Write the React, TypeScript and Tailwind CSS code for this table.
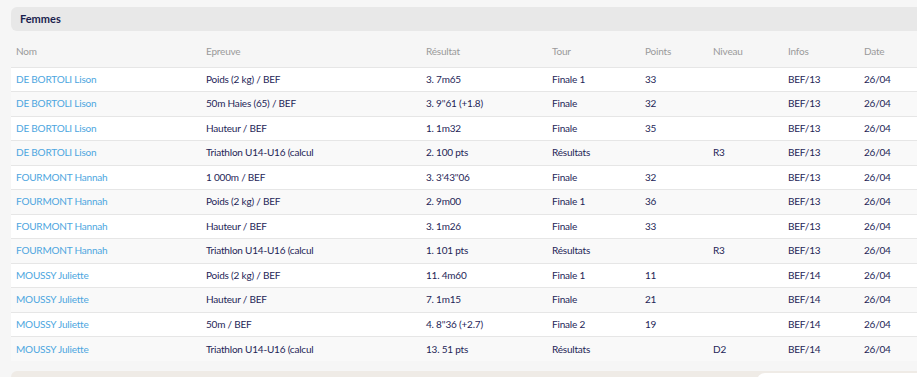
const rows = [
  ["DE BORTOLI Lison", "Poids (2 kg) / BEF", "3. 7m65", "Finale 1", "33", "", "BEF/13", "26/04"],
  ["DE BORTOLI Lison", "50m Haies (65) / BEF", "3. 9''61 (+1.8)", "Finale", "32", "", "BEF/13", "26/04"],
  ["DE BORTOLI Lison", "Hauteur / BEF", "1. 1m32", "Finale", "35", "", "BEF/13", "26/04"],
  ["DE BORTOLI Lison", "Triathlon U14-U16 (calcul", "2. 100 pts", "Résultats", "", "R3", "BEF/13", "26/04"],
  ["FOURMONT Hannah", "1 000m / BEF", "3. 3'43''06", "Finale", "32", "", "BEF/13", "26/04"],
  ["FOURMONT Hannah", "Poids (2 kg) / BEF", "2. 9m00", "Finale 1", "36", "", "BEF/13", "26/04"],
  ["FOURMONT Hannah", "Hauteur / BEF", "3. 1m26", "Finale", "33", "", "BEF/13", "26/04"],
  ["FOURMONT Hannah", "Triathlon U14-U16 (calcul", "1. 101 pts", "Résultats", "", "R3", "BEF/13", "26/04"],
  ["MOUSSY Juliette", "Poids (2 kg) / BEF", "11. 4m60", "Finale 1", "11", "", "BEF/14", "26/04"],
  ["MOUSSY Juliette", "Hauteur / BEF", "7. 1m15", "Finale", "21", "", "BEF/14", "26/04"],
  ["MOUSSY Juliette", "50m / BEF", "4. 8''36 (+2.7)", "Finale 2", "19", "", "BEF/14", "26/04"],
  ["MOUSSY Juliette", "Triathlon U14-U16 (calcul", "13. 51 pts", "Résultats", "", "D2", "BEF/14", "26/04"],
];

const headers = ["Nom", "Epreuve", "Résultat", "Tour", "Points", "Niveau", "Infos", "Date"];
const widths = ["w-[190px]", "w-[220px]", "w-[126px]", "w-[93px]", "w-[68px]", "w-[75px]", "w-[76px]", "w-[120px]"];

export default function App() {
  return (
    <div className="h-[377px] w-[917px] overflow-hidden bg-[#f6f6f6] pt-[7px] pl-[11px] font-['Lato',sans-serif]">
      <div className="w-[1000px]">
        <div className="flex h-[24px] items-center rounded-l-md bg-[#e8e8e8] pl-[9px] text-[11px] font-bold text-[#1b1f4f]">
          Femmes
        </div>
        <table className="mt-[5px] w-[968px] table-fixed border-collapse text-[10px] tracking-[-0.2px]">
          <thead>
            <tr className="h-[31px]">
              {headers.map((h, i) => (
                <th key={h} className={`${widths[i]} pl-[5px] pt-[1px] text-left font-normal text-[#9a9a9a]`}>
                  {h}
                </th>
              ))}
            </tr>
          </thead>
          <tbody>
            {rows.map((r, k) => (
              <tr
                key={k}
                className={`h-[24.5px] border-t border-[#e6e6e6] ${k % 2 === 0 ? "bg-white" : "bg-[#f9f9f9]"}`}
              >
                {r.map((c, i) => (
                  <td
                    key={i}
                    className={`pl-[5px] whitespace-nowrap ${i === 0 ? "text-[#4da6e0]" : "text-[#1e2557]"}`}
                  >
                    {c}
                  </td>
                ))}
              </tr>
            ))}
          </tbody>
        </table>
        <div className="mt-[10px] flex h-[20px] rounded-tl-md bg-[#efebe6]">
          <div className="ml-[746px] mt-[2px] h-[20px] flex-1 rounded-tl-lg bg-white" />
        </div>
      </div>
    </div>
  );
}
